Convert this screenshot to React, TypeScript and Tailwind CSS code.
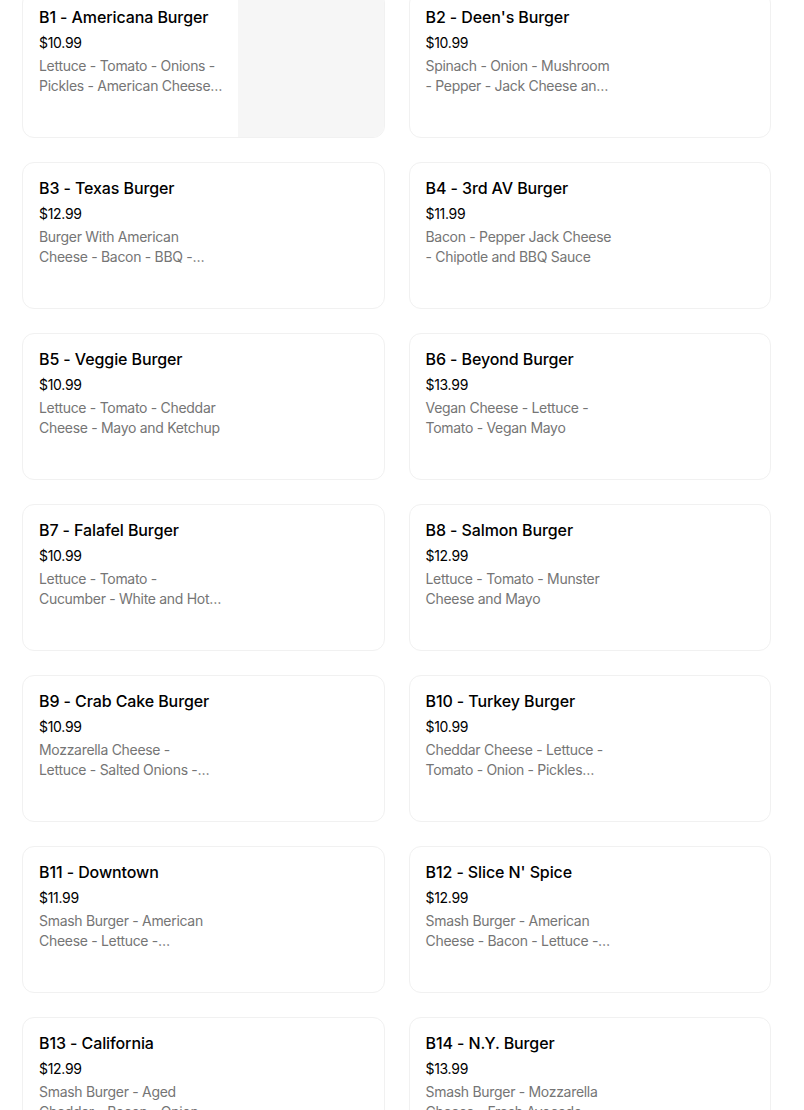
import React from 'react';

type Item = { code: string; name: string; price: string; lines: [string, string]; image?: boolean };

const items: Item[] = [
  { code: 'B1', name: 'Americana Burger', price: '$10.99', lines: ['Lettuce - Tomato - Onions -', 'Pickles - American Cheese…'], image: true },
  { code: 'B2', name: "Deen's Burger", price: '$10.99', lines: ['Spinach - Onion - Mushroom', '- Pepper - Jack Cheese an…'] },
  { code: 'B3', name: 'Texas Burger', price: '$12.99', lines: ['Burger With American', 'Cheese - Bacon - BBQ -…'] },
  { code: 'B4', name: '3rd AV Burger', price: '$11.99', lines: ['Bacon - Pepper Jack Cheese', '- Chipotle and BBQ Sauce'] },
  { code: 'B5', name: 'Veggie Burger', price: '$10.99', lines: ['Lettuce - Tomato - Cheddar', 'Cheese - Mayo and Ketchup'] },
  { code: 'B6', name: 'Beyond Burger', price: '$13.99', lines: ['Vegan Cheese - Lettuce -', 'Tomato - Vegan Mayo'] },
  { code: 'B7', name: 'Falafel Burger', price: '$10.99', lines: ['Lettuce - Tomato -', 'Cucumber - White and Hot…'] },
  { code: 'B8', name: 'Salmon Burger', price: '$12.99', lines: ['Lettuce - Tomato - Munster', 'Cheese and Mayo'] },
  { code: 'B9', name: 'Crab Cake Burger', price: '$10.99', lines: ['Mozzarella Cheese -', 'Lettuce - Salted Onions -…'] },
  { code: 'B10', name: 'Turkey Burger', price: '$10.99', lines: ['Cheddar Cheese - Lettuce -', 'Tomato - Onion - Pickles…'] },
  { code: 'B11', name: 'Downtown', price: '$11.99', lines: ['Smash Burger - American', 'Cheese - Lettuce -…'] },
  { code: 'B12', name: "Slice N' Spice", price: '$12.99', lines: ['Smash Burger - American', 'Cheese - Bacon - Lettuce -…'] },
  { code: 'B13', name: 'California', price: '$12.99', lines: ['Smash Burger - Aged', 'Cheddar - Bacon - Onion…'] },
  { code: 'B14', name: 'N.Y. Burger', price: '$13.99', lines: ['Smash Burger - Mozzarella', 'Cheese - Fresh Avocado -…'] },
];

function MenuCard({ item }: { item: Item }) {
  return (
    <div className="flex h-[147px] overflow-hidden rounded-xl border border-[#f1f1f1] bg-white">
      <div className="flex-1 min-w-0 px-4 pt-[13px]">
        <p className="text-[16px] leading-6 font-medium text-black tracking-[-0.1px]">{item.code} - {item.name}</p>
        <p className="mt-1 text-[14px] leading-5 text-black tracking-[-0.3px]">{item.price}</p>
        <div className="mt-[3px] w-[190px] text-[14px] leading-5 text-[#757575] tracking-[-0.3px]">
          <p className="whitespace-nowrap">{item.lines[0]}</p>
          <p className="whitespace-nowrap">{item.lines[1]}</p>
        </div>
      </div>
      {item.image && <div className="w-[146px] shrink-0 bg-[#f6f6f6]" />}
    </div>
  );
}

export default function App() {
  return (
    <div className="h-[1110px] overflow-hidden bg-white font-['Inter','Noto_Sans',sans-serif]">
      <div className="-mt-[9px] ml-[22px] grid w-[749px] grid-cols-2 gap-6">
        {items.map(it => <MenuCard key={it.code} item={it} />)}
      </div>
    </div>
  );
}
